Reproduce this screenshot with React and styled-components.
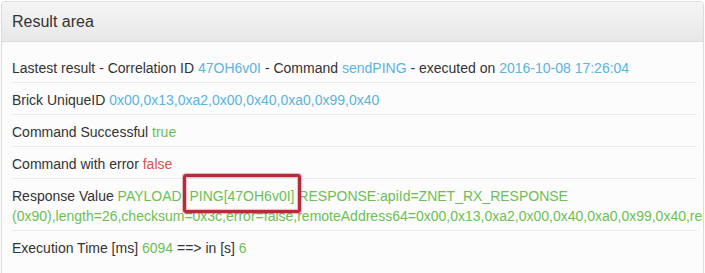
import React from "react";
import styled, { createGlobalStyle } from "styled-components";

const Global = createGlobalStyle`
  html, body { margin: 0; padding: 0; background: #fff; }
  body { font-family: "Liberation Sans", Arial, sans-serif; font-size: 14px; color: #333; }
`;

const Page = styled.div`
  height: 273px;
  overflow: hidden;
  padding: 1px 1px 0 1px;
  box-sizing: border-box;
`;

const Panel = styled.section`
  border: 1px solid #dcdcdc;
  border-radius: 4px;
  background: #fcfcfc;
  overflow: hidden;
  height: 300px;
  box-shadow: 0 1px 2px rgba(0, 0, 0, 0.05);
`;

const Heading = styled.header`
  height: 40px;
  box-sizing: border-box;
  display: flex;
  align-items: center;
  padding: 0 10px;
  background: linear-gradient(#f5f5f5, #e8e8e8);
  border-bottom: 1px solid #dcdcdc;
`;

const Title = styled.h3`
  margin: 0;
  font-size: 16px;
  font-weight: normal;
  color: #333;
`;

const Body = styled.div`
  padding: 9px 6px 0 10px;
  position: relative;
`;

const Row = styled.div`
  padding: 7px 0 4px;
  line-height: 20px;
  border-bottom: ${(p) => (p.$last ? "none" : "1px solid #eaeaea")};
`;

const Val = styled.span`
  color: ${(p) =>
    p.$tone === "info" ? "#5bb4dd" : p.$tone === "ok" ? "#6dbf55" : "#d9534f"};
`;

const Mark = styled.span`
  position: absolute;
  left: 181px;
  top: 132px;
  width: 112px;
  height: 33px;
  border: 3px solid #b52a3d;
  border-radius: 3px;
  box-shadow: 0 0 1px 1px rgba(181, 42, 61, 0.35), inset 0 0 1px 1px rgba(181, 42, 61, 0.3);
  pointer-events: none;
`;

export default function App() {
  return (
    <Page>
      <Global />
      <Panel>
        <Heading>
          <Title>Result area</Title>
        </Heading>
        <Body>
          <Row>
            Lastest result - Correlation ID <Val $tone="info">47OH6v0I</Val> - Command{" "}
            <Val $tone="info">sendPING</Val> - executed on{" "}
            <Val $tone="info">2016-10-08 17:26:04</Val>
          </Row>
          <Row>
            Brick UniqueID <Val $tone="info">0x00,0x13,0xa2,0x00,0x40,0xa0,0x99,0x40</Val>
          </Row>
          <Row>
            Command Successful <Val $tone="ok">true</Val>
          </Row>
          <Row>
            Command with error <Val $tone="err">false</Val>
          </Row>
          <Row>
            Response Value{" "}
            <Val $tone="ok">
              PAYLOAD: PING[47OH6v0I] RESPONSE:apiId=ZNET_RX_RESPONSE
              (0x90),length=26,checksum=0x3c,error=false,remoteAddress64=0x00,0x13,0xa2,0x00,0x40,0xa0,0x99,0x40,remoteAddress16=0xd1,0x5e
            </Val>
          </Row>
          <Row $last>
            Execution Time [ms] <Val $tone="ok">6094</Val> ==&gt; in [s] <Val $tone="ok">6</Val>
          </Row>
          <Mark />
        </Body>
      </Panel>
    </Page>
  );
}
